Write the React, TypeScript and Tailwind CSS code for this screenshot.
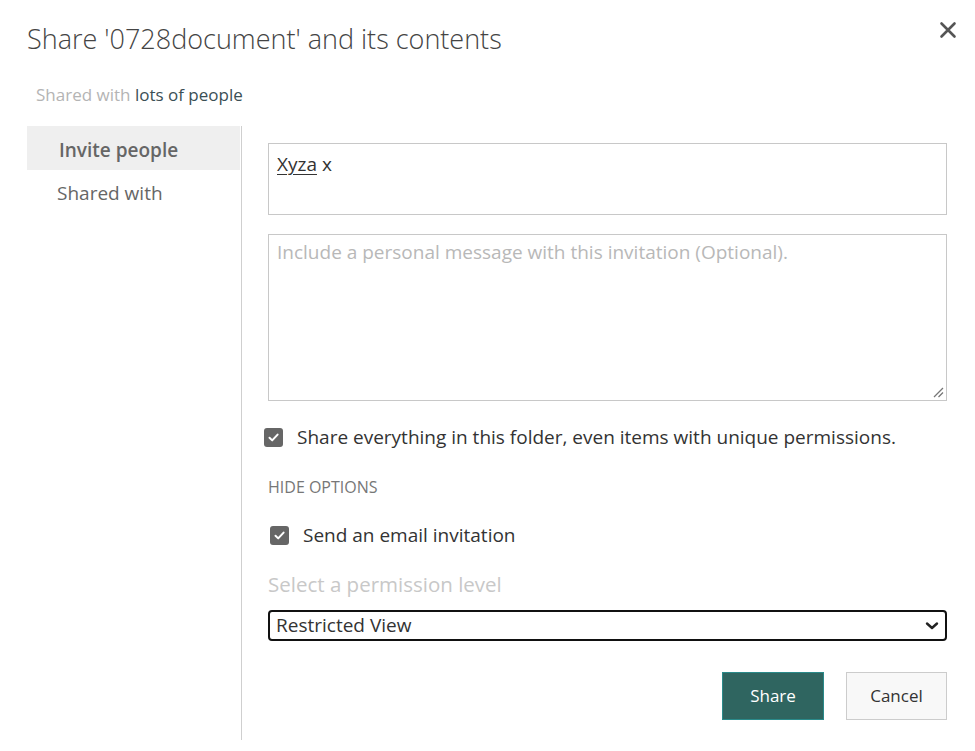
import React from "react";

const font = { fontFamily: '"Open Sans", "Noto Sans", sans-serif' };

function Check() {
  return (
    <span className="flex h-[19px] w-[19px] shrink-0 items-center justify-center rounded-[3px] bg-[#666666]">
      <svg width="13" height="13" viewBox="0 0 13 13" fill="none">
        <path d="M2.5 6.8 L5.2 9.4 L10.6 3.6" stroke="white" strokeWidth="2" strokeLinecap="round" strokeLinejoin="round" />
      </svg>
    </span>
  );
}

export default function App() {
  return (
    <div className="relative h-[751px] w-[975px] overflow-hidden bg-white text-[#333]" style={font}>
      <div className="flex items-start justify-between pl-[27px] pr-[18px] pt-[21px]">
        <h1 className="text-[27px] font-light leading-[36px] text-[#444]">Share '0728document' and its contents</h1>
        <button className="flex h-[18px] w-[18px] items-center justify-center">
          <svg width="18" height="18" viewBox="0 0 18 18">
            <path d="M2.5 2.5 L15.5 15.5 M15.5 2.5 L2.5 15.5" stroke="#555" strokeWidth="2.6" strokeLinecap="round" />
          </svg>
        </button>
      </div>
      <div className="pl-[36px] pt-[27px] text-[17px] leading-[22px]">
        <span className="text-[#b4b4b4]">Shared with </span>
        <span className="text-[#3b4f55]">lots of people</span>
      </div>
      <div className="mt-[20px] flex h-[614px] pl-[27px]">
        <nav className="w-[215px] shrink-0 border-r border-[#cfcfcf] pr-[1px]">
          <div className="flex h-[44px] items-center bg-[#efefef] pl-[32px] pt-[4px] text-[19px] font-semibold text-[#666]">Invite people</div>
          <div className="flex h-[46px] items-center pl-[30px] text-[19px] text-[#666]">Shared with</div>
        </nav>
        <div className="flex w-[705px] flex-col pl-[26px] pt-[17px]">
          <div className="h-[72px] w-[679px] border border-[#c8c8c8] px-[8px] pt-[6px] text-[19px] leading-[28px]">
            <span className="underline decoration-[1px] underline-offset-[3px]">Xyza</span> x
          </div>
          <div className="relative mt-[19px] h-[167px] w-[679px] border border-[#c8c8c8] px-[8px] pt-[3px] text-[19px] leading-[28px] text-[#b8b8b8]">
            Include a personal message with this invitation (Optional).
            <svg className="absolute bottom-[2px] right-[2px]" width="12" height="12" viewBox="0 0 12 12">
              <path d="M11 2 L2 11 M11 6.5 L6.5 11" stroke="#777" strokeWidth="1.3" />
            </svg>
          </div>
          <label className="mt-[24px] -ml-[4px] flex h-[24px] items-center gap-[14px] text-[19px] text-[#333]">
            <Check />
            <span>Share everything in this folder, even items with unique permissions.</span>
          </label>
          <div className="mt-[28px] h-[20px] text-[16px] leading-[20px] text-[#777]">HIDE OPTIONS</div>
          <label className="mt-[26px] ml-[2px] flex h-[24px] items-center gap-[14px] text-[19px] text-[#333]">
            <Check />
            <span>Send an email invitation</span>
          </label>
          <div className="mt-[23px] h-[28px] text-[20.5px] leading-[28px] text-[#c8c8c8]">Select a permission level</div>
          <div className="mt-[12px] flex h-[31px] w-[679px] items-center justify-between rounded-[4px] border-2 border-[#111] pl-[6px] pr-[6px] text-[19px] text-[#333]">
            <span>Restricted View</span>
            <svg width="14" height="10" viewBox="0 0 14 10">
              <path d="M2 2.5 L7 7 L12 2.5" stroke="#222" strokeWidth="2.4" fill="none" strokeLinecap="round" strokeLinejoin="round" />
            </svg>
          </div>
          <div className="mt-[31px] flex w-[679px] justify-end gap-[22px]">
            <button className="h-[48px] w-[102px] border border-[#2a8a8a] bg-[#2f6560] text-[17px] text-white">Share</button>
            <button className="h-[48px] w-[101px] border border-[#cccccc] bg-[#f8f8f8] text-[17px] text-[#333]">Cancel</button>
          </div>
        </div>
      </div>
    </div>
  );
}
